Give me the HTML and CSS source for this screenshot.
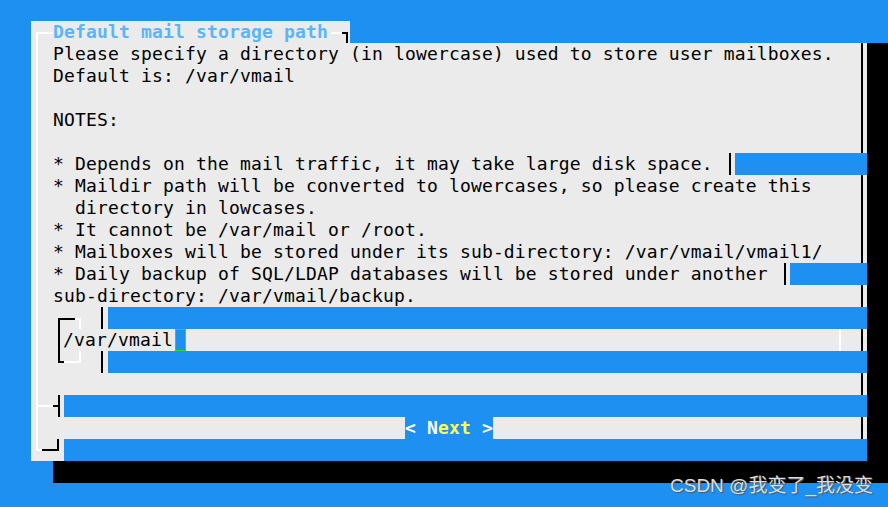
FILE: index.html
```html
<!DOCTYPE html>
<html>
<head>
<meta charset="utf-8">
<link rel="stylesheet" href="styles.css">
</head>
<body>
<div class="screen">
  <div class="main">
    <div class="dialog">
      <div class="title-row">
        <div class="title-box">
          <div class="tc-l"></div>
          <div class="title-text">Default mail storage path</div>
          <div class="tc-line"></div>
          <div class="tc-r"></div>
        </div>
      </div>
      <div class="body">
        <div class="row"><div class="l"></div><div class="t">Please specify a directory (in lowercase) used to store user mailboxes.</div><div class="edge"></div></div>
        <div class="row"><div class="l"></div><div class="t">Default is: /var/vmail</div><div class="edge"></div></div>
        <div class="row"><div class="l"></div><div class="t"></div><div class="edge"></div></div>
        <div class="row"><div class="l"></div><div class="t">NOTES:</div><div class="edge"></div></div>
        <div class="row"><div class="l"></div><div class="t"></div><div class="edge"></div></div>
        <div class="row"><div class="l"></div><div class="t w-dep">* Depends on the mail traffic, it may take large disk space.</div><div class="vb vb-dep"></div><div class="blue"></div></div>
        <div class="row"><div class="l"></div><div class="t">* Maildir path will be converted to lowercases, so please create this</div><div class="edge"></div></div>
        <div class="row"><div class="l"></div><div class="t">  directory in lowcases.</div><div class="edge"></div></div>
        <div class="row"><div class="l"></div><div class="t">* It cannot be /var/mail or /root.</div><div class="edge"></div></div>
        <div class="row"><div class="l"></div><div class="t">* Mailboxes will be stored under its sub-directory: /var/vmail/vmail1/</div><div class="edge"></div></div>
        <div class="row"><div class="l"></div><div class="t w-daily">* Daily backup of SQL/LDAP databases will be stored under another</div><div class="vb vb-daily"></div><div class="blue"></div></div>
        <div class="row"><div class="l"></div><div class="t">sub-directory: /var/vmail/backup.</div><div class="edge"></div></div>
        <div class="row">
          <div class="l"></div>
          <div class="ftl"></div><div class="ftr"></div>
          <div class="vl"></div>
          <div class="blue"></div>
        </div>
        <div class="row">
          <div class="l"></div>
          <div class="iv"></div>
          <div class="itext">/var/vmail</div>
          <div class="cursor"></div>
          <div class="t"></div>
          <div class="wv"></div>
          <div class="edge"></div>
        </div>
        <div class="row">
          <div class="l"></div>
          <div class="fbl"></div><div class="fbr"></div>
          <div class="vl"></div>
          <div class="blue"></div>
        </div>
        <div class="row"><div class="l"></div><div class="t"></div><div class="edge"></div></div>
        <div class="row">
          <div class="l"><div class="hw"></div></div>
          <div class="sk"><div class="hb"></div></div>
          <div class="vk"></div>
          <div class="blue"></div>
        </div>
        <div class="row">
          <div class="l"></div>
          <div class="t w-btn"></div>
          <div class="btn"><span class="wt">&lt; N</span><span class="yl">ext</span><span class="wt"> &gt;</span></div>
          <div class="t"></div>
          <div class="edge"></div>
        </div>
        <div class="row">
          <div class="bl"></div>
          <div class="br"></div>
          <div class="blue"></div>
        </div>
      </div>
    </div>
    <div class="side"></div>
  </div>
  <div class="bshadow"></div>
</div>
<div class="watermark">CSDN @我变了_我没变</div>
</body>
</html>
```

FILE: styles.css
```css
html, body {
  margin: 0;
  padding: 0;
}
body {
  width: 888px;
  height: 507px;
  overflow: hidden;
  background: #1e90f2;
  font-family: "DejaVu Sans Mono", "Liberation Mono", monospace;
  font-size: 18px;
  line-height: 22px;
  letter-spacing: 0.16px;
  color: #000;
  position: relative;
}
.screen {
  padding-top: 21px;
}
.main {
  display: flex;
  padding-left: 31px;
}
.dialog {
  width: 836px;
  flex: none;
}
.side {
  width: 21px;
  flex: none;
  margin-top: 22px;
  background: #000;
}
.bshadow {
  margin-left: 53px;
  height: 22px;
  background: #000;
}
.title-row {
  display: flex;
  height: 22px;
}
.title-box {
  width: 319px;
  background: #ebebeb;
  display: flex;
}
.tc-l {
  flex: none;
  margin-left: 5px;
  width: 17px;
  height: 11px;
  align-self: flex-end;
  box-sizing: border-box;
  border-left: 2px solid #fff;
  border-top: 2px solid #fff;
}
.title-text {
  flex: none;
  white-space: pre;
  color: #5ab6fb;
  font-weight: bold;
}
.tc-line {
  flex: none;
  margin-left: 3px;
  width: 11px;
  height: 11px;
  align-self: flex-end;
  box-sizing: border-box;
  border-top: 2px solid #fff;
}
.tc-r {
  flex: none;
  width: 6px;
  height: 11px;
  align-self: flex-end;
  box-sizing: border-box;
  border-top: 2px solid #000;
  border-right: 2px solid #000;
}
.body {
  background: #ebebeb;
}
.row {
  display: flex;
  height: 22px;
}
.l {
  flex: none;
  margin-left: 5px;
  width: 17px;
  box-sizing: border-box;
  border-left: 2px solid #fff;
}
.t {
  flex: 1;
  white-space: pre;
  overflow: hidden;
}
.edge {
  flex: none;
  width: 6px;
  box-sizing: border-box;
  border-left: 2px solid #000;
}
.blue {
  flex: 1;
  background: #1e90f2;
}
.w-dep {
  flex: none;
  width: 672px;
}
.w-daily {
  flex: none;
  width: 726px;
}
.vb {
  flex: none;
  width: 6px;
  box-sizing: border-box;
  border-left: 2px solid #000;
}
.vb-dep {
  margin-left: 4px;
}
.vb-daily {
  margin-left: 5px;
}
/* input frame */
.ftl {
  flex: none;
  margin-left: 5px;
  width: 17px;
  height: 11px;
  align-self: flex-end;
  box-sizing: border-box;
  border-left: 2px solid #000;
  border-top: 2px solid #000;
}
.ftr {
  flex: none;
  width: 6px;
  height: 11px;
  align-self: flex-end;
  box-sizing: border-box;
  border-right: 2px solid #fff;
  border-top: 2px solid #fff;
}
.fbl {
  flex: none;
  margin-left: 5px;
  width: 6px;
  height: 12px;
  box-sizing: border-box;
  border-left: 2px solid #000;
  border-bottom: 2px solid #000;
}
.fbr {
  flex: none;
  width: 17px;
  height: 12px;
  box-sizing: border-box;
  border-right: 2px solid #fff;
  border-bottom: 2px solid #fff;
}
.vl {
  flex: none;
  margin-left: 20px;
  margin-right: 5px;
  width: 2px;
  background: #000;
}
.iv {
  flex: none;
  margin-left: 5px;
  width: 5px;
  box-sizing: border-box;
  border-left: 2px solid #000;
}
.itext {
  flex: none;
  white-space: pre;
}
.cursor {
  flex: none;
  margin-left: 2px;
  width: 11px;
  box-sizing: border-box;
  border: 1px solid #22e022;
  background: #1e90f2;
}
.wv {
  flex: none;
  width: 22px;
  box-sizing: border-box;
  border-left: 2px solid #fff;
}
/* separator */
.hw {
  height: 12px;
  box-sizing: border-box;
  border-bottom: 2px solid #fff;
}
.sk {
  flex: none;
  width: 5px;
}
.hb {
  height: 12px;
  box-sizing: border-box;
  border-bottom: 2px solid #000;
}
.vk {
  flex: none;
  width: 2px;
  margin-right: 4px;
  background: #000;
}
/* button */
.w-btn {
  flex: none;
  width: 352px;
}
.btn {
  flex: none;
  width: 88px;
  background: #1e90f2;
  white-space: pre;
  font-weight: bold;
}
.wt {
  color: #fff;
}
.yl {
  color: #ffff55;
}
/* bottom corner */
.bl {
  flex: none;
  margin-left: 5px;
  width: 6px;
  height: 12px;
  box-sizing: border-box;
  border-left: 2px solid #fff;
  border-bottom: 2px solid #fff;
}
.br {
  flex: none;
  width: 17px;
  height: 12px;
  margin-right: 5px;
  box-sizing: border-box;
  border-right: 2px solid #000;
  border-bottom: 2px solid #000;
}
.watermark {
  position: absolute;
  left: 670px;
  top: 475px;
  font-family: "Liberation Sans", "Noto Sans CJK SC", sans-serif;
  font-size: 19px;
  line-height: 22px;
  letter-spacing: 0;
  color: #dcdcdc;
  text-shadow: 1px 1px 1px #555;
  white-space: nowrap;
}
```
